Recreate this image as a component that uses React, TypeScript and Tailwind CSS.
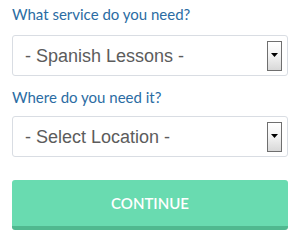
import { useState } from "react";

function FakeSelect({ value }: { value: string }) {
  return (
    <div className="flex h-[41px] items-center justify-between rounded-[3px] border border-[#d9dde3] bg-white pl-[12px] pr-[5px]">
      <span className="font-['Liberation_Sans',Arial,sans-serif] text-[18px] leading-[20px] text-[#5c5c5c] whitespace-pre">
        {value}
      </span>
      <div className="flex h-[30px] w-[15px] items-center justify-center border border-[#6f6f6f] bg-gradient-to-b from-white via-[#f2f2f2] to-[#d8d8d8]">
        <svg width="7" height="4" viewBox="0 0 7 4" className="mb-[2px]">
          <path d="M0 0h7L3.5 4z" fill="#000" />
        </svg>
      </div>
    </div>
  );
}

export default function App() {
  const [service] = useState("- Spanish Lessons -");
  const [location] = useState("- Select Location -");

  return (
    <div className="w-[300px] h-[240px] bg-white px-3 pt-[4px] font-['Lato',sans-serif]">
      <label className="block h-5 text-[15px] leading-5 text-[#2b6ca3] mb-[11px]">
        What service do you need?
      </label>
      <FakeSelect value={service} />

      <label className="block h-5 text-[15px] leading-5 text-[#2b6ca3] mt-[11px] mb-[9px]">
        Where do you need it?
      </label>
      <FakeSelect value={location} />

      <button className="mt-[23px] flex h-[50px] w-full items-center justify-center rounded-[3px] border-b-4 border-[#50b88f] bg-[#69dbb0] text-[15px] font-semibold text-white">
        CONTINUE
      </button>
    </div>
  );
}
